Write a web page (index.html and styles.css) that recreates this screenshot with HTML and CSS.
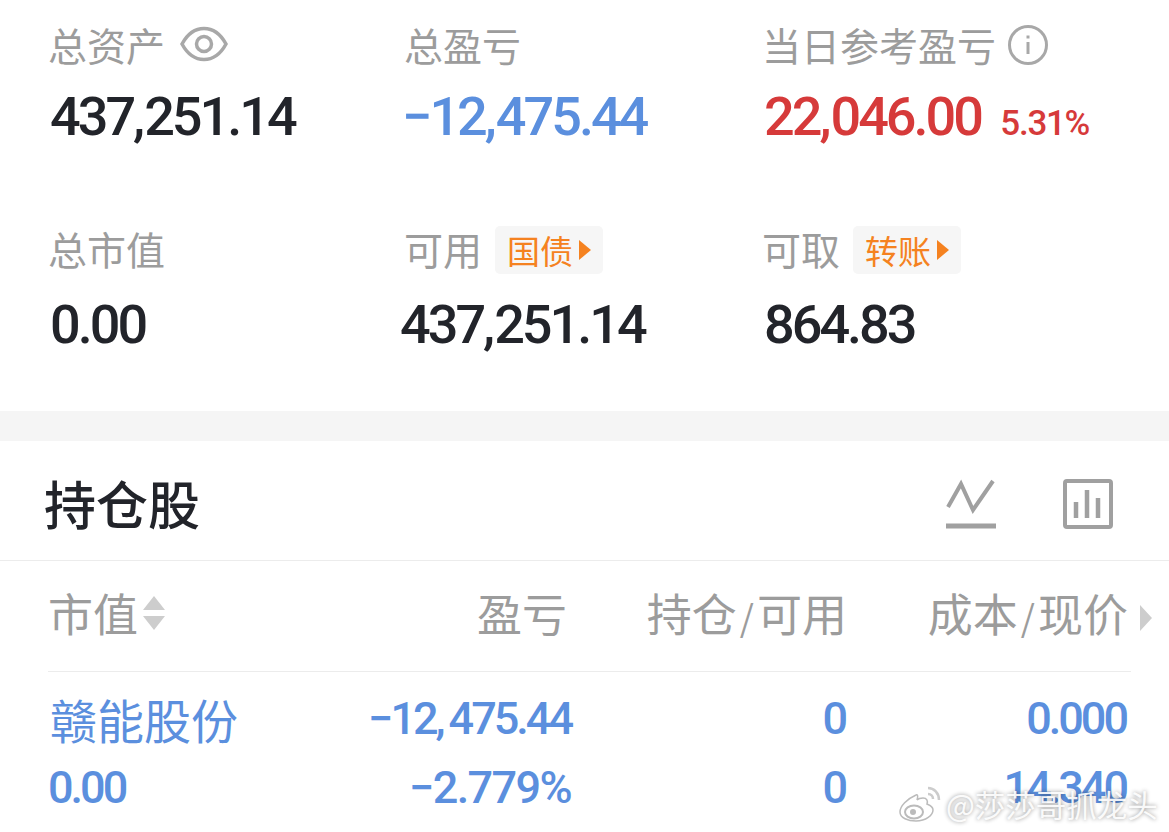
FILE: index.html
```html
<!DOCTYPE html>
<html lang="zh-CN">
<head>
  <meta charset="UTF-8">
  <title>持仓</title>
  <link rel="stylesheet" href="styles.css">
</head>
<body>
  <div class="summary">
    <div class="cell">
      <div class="label">总资产
        <svg class="eye" width="48" height="36" viewBox="0 0 48 36" fill="none" stroke="#a8a8a8" stroke-width="3.500">
          <path d="M2 18C8 7 15 2.500 24 2.500S40 7 46 18C40 29 33 33.500 24 33.500S8 29 2 18Z"/>
          <circle cx="24" cy="18" r="7.500"/>
        </svg>
      </div>
      <div class="value">437<span class="comma">,</span>251.14</div>
    </div>
    <div class="cell">
      <div class="label">总盈亏</div>
      <div class="value blue minus">−12<span class="comma">,</span>475.44</div>
    </div>
    <div class="cell">
      <div class="label">当日参考盈亏
        <svg class="info" width="40" height="40" viewBox="0 0 40 40" fill="none" stroke="#a8a8a8">
          <circle cx="20" cy="20" r="18.500" stroke-width="3"/>
          <path d="M20 17V29" stroke-width="3"/>
          <path d="M20 10.500V13.500" stroke-width="3"/>
        </svg>
      </div>
      <div class="value red">22<span class="comma">,</span>046.00 <span class="pct">5.31%</span></div>
    </div>
    <div class="cell">
      <div class="label">总市值</div>
      <div class="value">0.00</div>
    </div>
    <div class="cell">
      <div class="label">可用 <span class="tag">国债<i class="tag-arrow"></i></span></div>
      <div class="value shift">437<span class="comma">,</span>251.14</div>
    </div>
    <div class="cell">
      <div class="label">可取 <span class="tag">转账<i class="tag-arrow"></i></span></div>
      <div class="value">864.83</div>
    </div>
  </div>

  <div class="band"></div>

  <div class="title-row">
    <h2>持仓股</h2>
    <svg class="tool" width="50" height="50" viewBox="0 0 50 50" fill="none" stroke="#a0a0a0" stroke-width="4">
      <path d="M2 28L15 5L27 31L47 2"/>
      <path d="M0 47H50" stroke-width="5"/>
    </svg>
    <svg class="tool" width="50" height="50" viewBox="0 0 50 50" fill="none" stroke="#a0a0a0">
      <rect x="2" y="2" width="46" height="46" rx="2" stroke-width="4"/>
      <path d="M13 23V39M24 11V39M35 19V39" stroke-width="4.500"/>
    </svg>
  </div>

  <div class="table">
    <div class="head">
      <div class="col-name">市值<span class="sort"><i class="up"></i><i class="down"></i></span></div>
      <div class="col-pl">盈亏</div>
      <div class="col-pos">持仓<em>/</em>可用</div>
      <div class="col-cost">成本<em>/</em>现价</div>
      <i class="more"></i>
    </div>
    <div class="row">
      <div class="col-name name">赣能股份</div>
      <div class="col-pl num">−12<span class="comma-sm">,</span>475.44</div>
      <div class="col-pos num">0</div>
      <div class="col-cost num">0.000</div>
    </div>
    <div class="row">
      <div class="col-name num">0.00</div>
      <div class="col-pl num rate">−2.779%</div>
      <div class="col-pos num">0</div>
      <div class="col-cost num">14.340</div>
    </div>
  </div>

  <div class="watermark">
    <svg width="44" height="38" viewBox="0 0 44 38">
      <path d="M18 10C9 14 2 21 2 27C2 33 10 36 18 36C28 36 35 30 35 25C35 21 31 20 29 19C30 16 29 13 25 13C22 13 20 14 19 15C20 12 20 9 18 10Z" fill="#fff" stroke="#bbb" stroke-width="1.500"/>
      <ellipse cx="16" cy="27" rx="9" ry="6.500" fill="none" stroke="#bbb" stroke-width="2"/>
      <circle cx="15" cy="27" r="3" fill="#bbb"/>
      <path d="M30 3C36 3 41 8 41 15M30 9C33 9 35 11 35 14" fill="none" stroke="#ccc" stroke-width="2.500"/>
    </svg>
    <span>@莎莎哥抓龙头</span>
  </div>
</body>
</html>
```

FILE: styles.css
```css
html, body {
  margin: 0;
  height: 832px;
  overflow: hidden;
  background: #fff;
}

body {
  position: relative;
  font-family: "Noto Sans CJK SC", "Noto Sans", sans-serif;
}

.summary {
  display: grid;
  grid-template-columns: 356px 358px 1fr;
  grid-auto-rows: 204px;
  height: 411px;
  padding-left: 48px;
  box-sizing: border-box;
}

.cell {
  padding-top: 20px;
}

.label {
  display: flex;
  align-items: center;
  height: 48px;
  font-size: 39px;
  line-height: 48px;
  color: #9c9c9c;
}

.eye {
  margin-left: 15px;
}

.info {
  margin: 2px 0 0 12px;
}

.value {
  margin-top: 19px;
  padding-left: 2px;
  font-family: Roboto, sans-serif;
  font-size: 54px;
  font-weight: 500;
  line-height: 60px;
  letter-spacing: -3px;
  color: #22242a;
  white-space: nowrap;
}

.cell:nth-child(n+4) .value {
  margin-top: 23px;
}

.comma {
  letter-spacing: -1px;
}

.blue {
  color: #5b8fde;
}

.red {
  color: #d63a3a;
}

.shift {
  margin-left: -6px;
}

.minus {
  margin-left: -4px;
}

.pct {
  font-size: 35px;
  font-weight: 500;
  letter-spacing: -1.300px;
  margin-left: 9px;
}

.tag {
  display: flex;
  align-items: center;
  height: 48px;
  margin: 4px 0 0 13px;
  padding: 0 12px;
  border-radius: 5px;
  background: #f6f6f6;
  font-size: 33px;
  color: #f58220;
}

.tag-arrow {
  margin-left: 6px;
  border-left: 12px solid #f58220;
  border-top: 10px solid transparent;
  border-bottom: 10px solid transparent;
}

.band {
  height: 30px;
  background: #f5f5f5;
}

.title-row {
  display: flex;
  align-items: center;
  height: 115px;
  padding: 4px 56px 0 44px;
  border-bottom: 1px solid #ececec;
}

h2 {
  flex: 1;
  margin: 0;
  font-size: 52px;
  font-weight: 500;
  color: #22242a;
}

.tool {
  margin: 2px 0 0 67px;
}

.table {
  margin: 0 38px 0 48px;
}

.head,
.row {
  display: flex;
  align-items: center;
  white-space: nowrap;
}

.head {
  position: relative;
  height: 111px;
  padding-bottom: 7px;
  box-sizing: border-box;
  border-bottom: 1px solid #ececec;
  font-size: 45px;
  color: #9c9c9c;
}

.head em {
  font-style: normal;
  font-size: 36px;
  margin: 0 3px;
}

.col-name {
  width: 280px;
  box-sizing: border-box;
  display: flex;
  align-items: center;
}

.col-pl {
  width: 245px;
  text-align: right;
  box-sizing: border-box;
}

.col-pos {
  width: 274px;
  text-align: right;
  box-sizing: border-box;
}

.col-cost {
  width: 281px;
  text-align: right;
  box-sizing: border-box;
}

.head .col-pl {
  padding-right: 6px;
}

.row .col-pl,
.row .col-pos,
.row .col-cost {
  padding-right: 2px;
}

.sort {
  display: flex;
  flex-direction: column;
  gap: 6px;
  margin-left: 5px;
}

.up {
  border-bottom: 14px solid #cdcdcd;
  border-left: 11px solid transparent;
  border-right: 11px solid transparent;
}

.down {
  border-top: 14px solid #cdcdcd;
  border-left: 11px solid transparent;
  border-right: 11px solid transparent;
}

.more {
  position: absolute;
  left: 1092px;
  top: 44px;
  border-left: 12px solid #cdcdcd;
  border-top: 13px solid transparent;
  border-bottom: 13px solid transparent;
}

.row {
  height: 69px;
  font-family: Roboto, sans-serif;
  font-size: 45px;
  font-weight: 500;
  color: #5b8fde;
}

.head + .row {
  margin-top: 12px;
}

.num {
  letter-spacing: -3px;
}

.rate {
  letter-spacing: -1.600px;
}

.comma-sm {
  letter-spacing: 3px;
}

.name {
  padding-left: 2px;
  font-family: "Noto Sans CJK SC", sans-serif;
  font-size: 47px;
  font-weight: 400;
}

.watermark {
  position: absolute;
  left: 898px;
  top: 782px;
  display: flex;
  align-items: center;
  gap: 4px;
  font-size: 30.500px;
  color: rgba(255, 255, 255, .92);
  text-shadow: 0 0 4px rgba(0, 0, 0, .45);
  white-space: nowrap;
}
```
